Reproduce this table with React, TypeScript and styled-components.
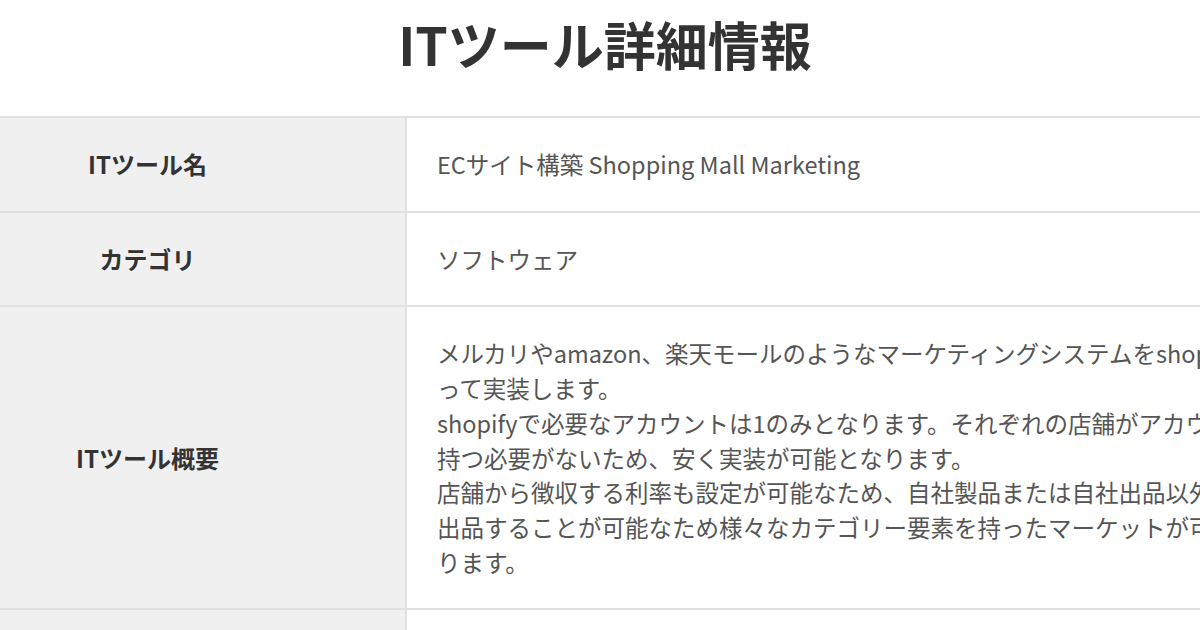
import styled, { createGlobalStyle } from "styled-components";

const GlobalStyle = createGlobalStyle`
  html, body {
    margin: 0;
    padding: 0;
    background: #ffffff;
    overflow: hidden;
  }
  body {
    width: 1200px;
    height: 630px;
    font-family: "Noto Sans CJK JP", "Noto Sans", sans-serif;
  }
`;

const Page = styled.div`
  width: 1200px;
  height: 630px;
  overflow: hidden;
`;

// the content column is wider than the window, centred, so both sides are cut
const Content = styled.div`
  width: 1430px;
  margin-left: -110px;
`;

const Title = styled.h1`
  margin: 7px 0 36px;
  text-align: center;
  font-size: 52px;
  line-height: 73px;
  font-weight: 700;
  color: #333333;
`;

const Table = styled.table`
  width: 100%;
  border-collapse: collapse;
  border-top: 2px solid #e0e0e0;
  table-layout: fixed;
`;

const Row = styled.tr`
  border-bottom: 2px solid #e0e0e0;
`;

const Label = styled.th`
  box-sizing: border-box;
  width: 516px;
  background: #f0f0f0;
  border-right: 2px solid #e0e0e0;
  padding: 29px 20px;
  font-size: 24px;
  line-height: 34px;
  font-weight: 700;
  color: #333333;
  text-align: center;
  vertical-align: middle;
`;

const Value = styled.td`
  padding: 29px 30px;
  font-size: 23.5px;
  line-height: 34.7px;
  color: #555555;
  text-align: left;
  vertical-align: middle;
`;

const Description = styled.div`
  white-space: nowrap;
`;

const rows = [
  { label: "ITツール名", value: "ECサイト構築 Shopping Mall Marketing" },
  { label: "カテゴリ", value: "ソフトウェア" },
];

const description = [
  "メルカリやamazon、楽天モールのようなマーケティングシステムをshopifyを使",
  "って実装します。",
  "shopifyで必要なアカウントは1のみとなります。それぞれの店舗がアカウントを",
  "持つ必要がないため、安く実装が可能となります。",
  "店舗から徴収する利率も設定が可能なため、自社製品または自社出品以外も",
  "出品することが可能なため様々なカテゴリー要素を持ったマーケットが可能とな",
  "ります。",
];

function App() {
  return (
    <Page>
      <GlobalStyle />
      <Content>
        <Title>ITツール詳細情報</Title>
        <Table>
          <tbody>
            {rows.map((row) => (
              <Row key={row.label}>
                <Label>{row.label}</Label>
                <Value>{row.value}</Value>
              </Row>
            ))}
            <Row>
              <Label>ITツール概要</Label>
              <Value>
                <Description>
                  {description.map((line, i) => (
                    <span key={i}>
                      {line}
                      {i < description.length - 1 && <br />}
                    </span>
                  ))}
                </Description>
              </Value>
            </Row>
            <Row>
              <Label>対応環境</Label>
              <Value>Webブラウザ</Value>
            </Row>
          </tbody>
        </Table>
      </Content>
    </Page>
  );
}

export default App;
